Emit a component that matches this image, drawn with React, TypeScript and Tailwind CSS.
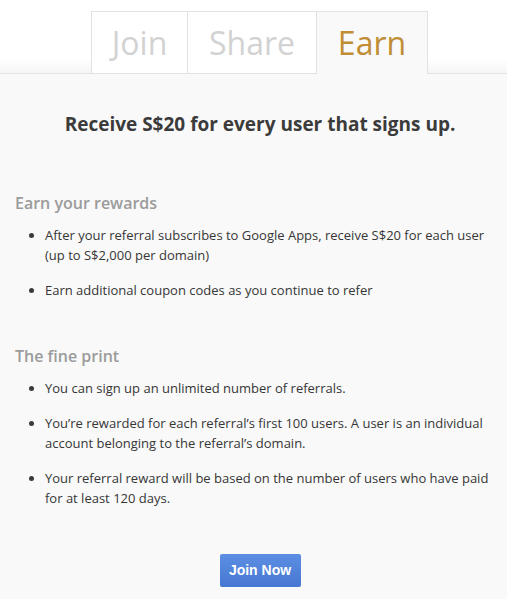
const rewards = [
  'After your referral subscribes to Google Apps, receive S$20 for each user (up to S$2,000 per domain)',
  'Earn additional coupon codes as you continue to refer',
];

const finePrint = [
  'You can sign up an unlimited number of referrals.',
  'You’re rewarded for each referral’s first 100 users. A user is an individual account belonging to the referral’s domain.',
  'Your referral reward will be based on the number of users who have paid for at least 120 days.',
];

function Section({ title, items }: { title: string; items: string[] }) {
  return (
    <div>
      <h3 className="text-[16px] leading-[22px] font-semibold text-[#9b9b9b]">{title}</h3>
      <ul className="mt-[11px] space-y-[15px]">
        {items.map((item) => (
          <li key={item} className="flex text-[13px] leading-[20px] text-[#363636]">
            <span className="w-[30px] shrink-0 h-[20px] flex items-center pl-[14px]">
              <span className="w-[5px] h-[5px] rounded-full bg-[#3a3a3a]" />
            </span>
            <span>{item}</span>
          </li>
        ))}
      </ul>
    </div>
  );
}

export default function App() {
  return (
    <div className="w-[507px] h-[599px] bg-[#f9f9f9] overflow-hidden" style={{ fontFamily: '"Open Sans", "Liberation Sans", sans-serif' }}>
      <div className="bg-gradient-to-b from-white from-80% to-[#f6f6f6] border-b border-[#e2e2e2] pt-[11px] pl-[91px] flex">
        <div className="w-[97px] h-[62px] bg-white border border-b-0 border-[#e2e2e2] flex items-center justify-center text-[32px] text-[#d2d2d2]">
          Join
        </div>
        <div className="w-[129px] h-[62px] bg-white border border-l-0 border-b-0 border-[#e2e2e2] flex items-center justify-center text-[32px] text-[#d2d2d2]">
          Share
        </div>
        <div className="w-[111px] h-[63px] -mb-px bg-[#f9f9f9] border border-l-0 border-b-0 border-[#e2e2e2] flex items-center justify-center text-[32px] text-[#c08d35]">
          Earn
        </div>
      </div>

      <div className="pl-[15px] pr-[8px]">
        <h2 className="mt-[36px] pl-[6px] text-center text-[19px] leading-[28px] font-bold text-[#3b3b3b]">
          Receive S$20 for every user that signs up.
        </h2>

        <div className="mt-[54px]">
          <Section title="Earn your rewards" items={rewards} />
        </div>

        <div className="mt-[45px]">
          <Section title="The fine print" items={finePrint} />
        </div>

        <div className="mt-[46px] pl-[6px] flex justify-center">
          <button
            className="w-[81px] h-[33px] rounded-[2px] bg-gradient-to-b from-[#5c8fe3] to-[#4677d2] text-white text-[14px] font-bold"
            style={{ fontFamily: '"Liberation Sans", Arial, sans-serif' }}
          >
            Join Now
          </button>
        </div>
      </div>
    </div>
  );
}
